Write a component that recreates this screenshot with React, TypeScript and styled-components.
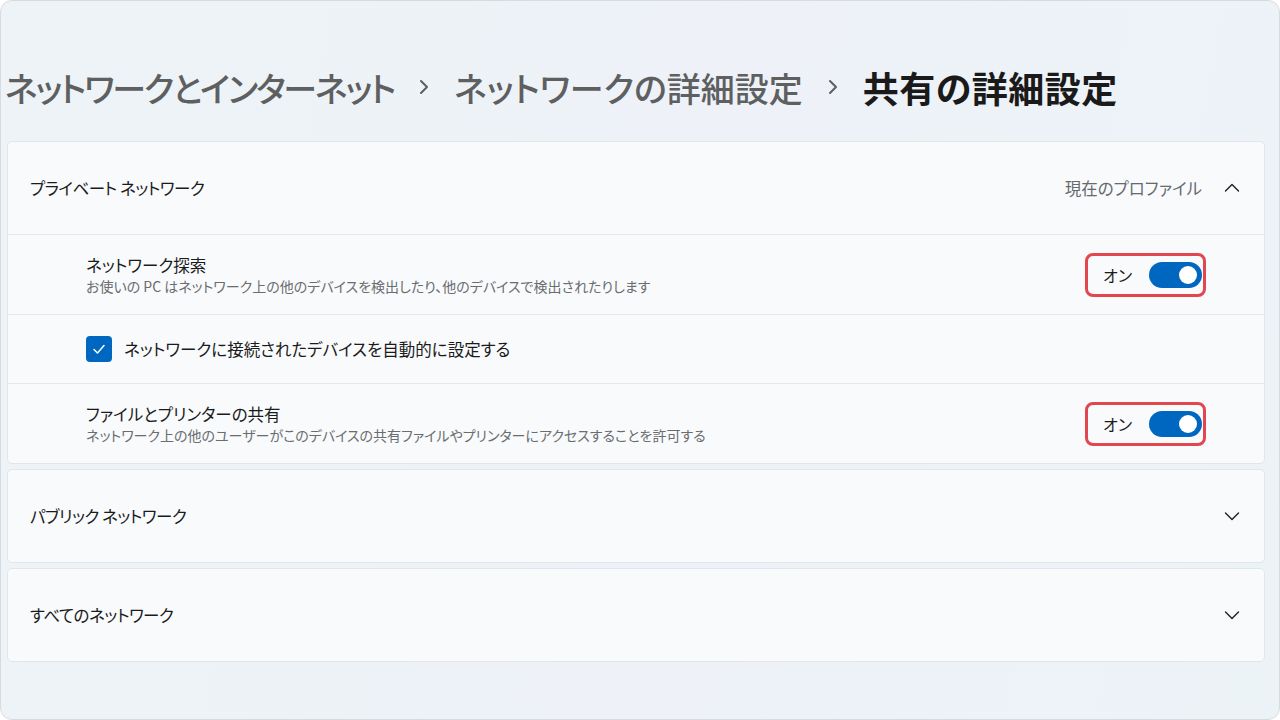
import * as React from 'react';
import styled, { createGlobalStyle } from 'styled-components';

const GlobalStyle = createGlobalStyle`
  html, body {
    margin: 0;
    padding: 0;
    background: #ffffff;
  }
  body {
    font-family: "Noto Sans CJK JP", "Noto Sans", sans-serif;
    font-feature-settings: "palt";
    color: #1b1b1b;
  }
`;

const Window = styled.div`
  box-sizing: border-box;
  width: 1280px;
  height: 720px;
  border: 1px solid #d6dbe0;
  border-radius: 12px;
  background: linear-gradient(100deg, #edf3f7 0%, #eef2f8 55%, #ecf3f7 100%);
  padding: 0 14px 0 6px;
  overflow: hidden;
`;

const Breadcrumb = styled.div`
  display: flex;
  align-items: center;
  height: 48px;
  padding-top: 62px;
  margin-bottom: 30px;
  margin-left: -2px;
  white-space: nowrap;
`;

const Crumb = styled.span<{ $current?: boolean; $spacing?: number }>`
  color: ${(p) => (p.$current ? '#1a1a1a' : '#5d5f61')};
  font-weight: ${(p) => (p.$current ? 700 : 500)};
  font-size: ${(p) => (p.$current ? '36px' : '34px')};
  letter-spacing: ${(p) => p.$spacing ?? 0}px;
`;

const Sep = styled.span`
  display: inline-flex;
  width: 60px;
  justify-content: center;
`;

const Stack = styled.div`
  display: flex;
  flex-direction: column;
  gap: 5px;
`;

const Card = styled.div`
  background: #f8fafc;
  border: 1px solid #e1e6ea;
  border-radius: 5px;
  overflow: hidden;
`;

const CardHeader = styled.div`
  display: flex;
  align-items: center;
  height: 92px;
  padding: 0 24px 0 22px;
  font-size: 16.5px;
`;

const HeaderTitle = styled.div`
  flex: 1;
  letter-spacing: -0.5px;
`;

const HeaderNote = styled.div`
  color: #666a6e;
  margin-right: 22px;
`;

const Row = styled.div<{ $height: number }>`
  display: flex;
  align-items: center;
  height: ${(p) => p.$height}px;
  padding: 0 58px 0 78px;
  border-top: 1.5px solid #e3e8ec;
`;

const RowText = styled.div`
  flex: 1;
  display: flex;
  flex-direction: column;
`;

const RowTitle = styled.div`
  font-size: 16.5px;
  line-height: 22px;
  color: #1b1b1b;
`;

const RowDesc = styled.div`
  font-size: 14px;
  line-height: 20px;
  color: #6a6d70;
`;

const Highlight = styled.div`
  display: flex;
  align-items: center;
  gap: 17px;
  border: 3px solid #e2474f;
  border-radius: 8px;
  padding: 6px 1px 6px 15px;
`;

const ToggleLabel = styled.span`
  font-size: 16px;
  color: #1b1b1b;
`;

const Switch = styled.div`
  position: relative;
  width: 53px;
  height: 26px;
  border-radius: 13px;
  background: #0067c0;
`;

const Knob = styled.span`
  position: absolute;
  right: 5px;
  top: 4px;
  width: 18px;
  height: 18px;
  border-radius: 50%;
  background: #ffffff;
`;

const CheckRow = styled.label`
  display: flex;
  align-items: center;
  gap: 12px;
  font-size: 16.5px;
`;

const CheckBox = styled.span`
  display: inline-flex;
  align-items: center;
  justify-content: center;
  width: 26px;
  height: 26px;
  border-radius: 4px;
  background: #0067c0;
`;

const Chevron = ({ up }: { up?: boolean }) => (
  <svg width="16" height="16" viewBox="0 0 16 16" fill="none">
    <path
      d={up ? 'M1.5 11 L8 4.5 L14.5 11' : 'M1.5 5 L8 11.5 L14.5 5'}
      stroke="#1f1f1f"
      strokeWidth="1.4"
      strokeLinecap="round"
      strokeLinejoin="round"
    />
  </svg>
);

const CrumbArrow = () => (
  <Sep>
    <svg width="14" height="20" viewBox="0 0 14 20" fill="none">
      <path d="M4 4 L10 10 L4 16" stroke="#5d5f61" strokeWidth="2" strokeLinecap="round" strokeLinejoin="round" />
    </svg>
  </Sep>
);

const Toggle = () => (
  <Highlight>
    <ToggleLabel>オン</ToggleLabel>
    <Switch>
      <Knob />
    </Switch>
  </Highlight>
);

export default function App() {
  return (
    <>
      <GlobalStyle />
      <Window>
        <Breadcrumb>
          <Crumb $spacing={-2.1}>ネットワークとインターネット</Crumb>
          <CrumbArrow />
          <Crumb>ネットワークの詳細設定</Crumb>
          <CrumbArrow />
          <Crumb $current $spacing={0.5}>共有の詳細設定</Crumb>
        </Breadcrumb>

        <Stack>
          <Card>
            <CardHeader>
              <HeaderTitle>プライベート ネットワーク</HeaderTitle>
              <HeaderNote>現在のプロファイル</HeaderNote>
              <Chevron up />
            </CardHeader>
            <Row $height={79}>
              <RowText>
                <RowTitle>ネットワーク探索</RowTitle>
                <RowDesc>お使いの PC はネットワーク上の他のデバイスを検出したり、他のデバイスで検出されたりします</RowDesc>
              </RowText>
              <Toggle />
            </Row>
            <Row $height={68}>
              <CheckRow>
                <CheckBox>
                  <svg width="14" height="14" viewBox="0 0 14 14" fill="none">
                    <path d="M2 7.5 L5.5 11 L12 3.5" stroke="#ffffff" strokeWidth="1.5" strokeLinecap="round" strokeLinejoin="round" />
                  </svg>
                </CheckBox>
                ネットワークに接続されたデバイスを自動的に設定する
              </CheckRow>
            </Row>
            <Row $height={79}>
              <RowText>
                <RowTitle>ファイルとプリンターの共有</RowTitle>
                <RowDesc>ネットワーク上の他のユーザーがこのデバイスの共有ファイルやプリンターにアクセスすることを許可する</RowDesc>
              </RowText>
              <Toggle />
            </Row>
          </Card>

          <Card>
            <CardHeader>
              <HeaderTitle>パブリック ネットワーク</HeaderTitle>
              <Chevron />
            </CardHeader>
          </Card>

          <Card>
            <CardHeader>
              <HeaderTitle>すべてのネットワーク</HeaderTitle>
              <Chevron />
            </CardHeader>
          </Card>
        </Stack>
      </Window>
    </>
  );
}
